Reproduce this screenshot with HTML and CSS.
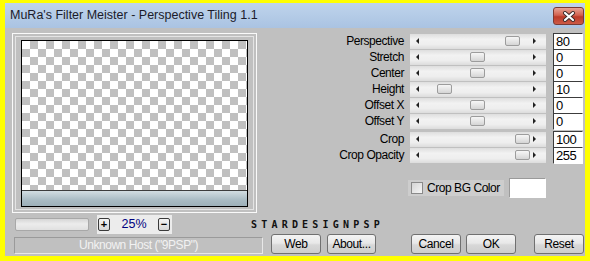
FILE: index.html
```html
<!DOCTYPE html>
<html lang="en">
<head>
  <meta charset="UTF-8">
  <title>Perspective Tiling</title>
  <link rel="stylesheet" href="styles.css">
</head>
<body>
  <div class="window">
    <div class="titlebar">
      <span class="title">MuRa's Filter Meister - Perspective Tiling 1.1</span>
      <button class="close">
        <svg width="14" height="11" viewBox="0 0 14 11">
          <path d="M3 2 L11 9 M11 2 L3 9" stroke="#3a2a2a" stroke-width="4" stroke-linecap="round"/>
          <path d="M3 2 L11 9 M11 2 L3 9" stroke="#ffffff" stroke-width="2.2" stroke-linecap="round"/>
        </svg>
      </button>
    </div>
    <div class="content">
      <div class="main">
        <div class="frame">
          <div class="preview">
            <div class="checker"></div>
            <div class="shade"></div>
          </div>
        </div>
        <div class="controls">
          <div class="slider">
            <span class="label">Perspective</span>
            <div class="track"><span class="arr left"></span><span class="thumb" style="left:95px"></span><span class="arr right"></span></div>
            <span class="val">80</span>
          </div>
          <div class="slider">
            <span class="label">Stretch</span>
            <div class="track"><span class="arr left"></span><span class="thumb" style="left:60px"></span><span class="arr right"></span></div>
            <span class="val">0</span>
          </div>
          <div class="slider">
            <span class="label">Center</span>
            <div class="track"><span class="arr left"></span><span class="thumb" style="left:60px"></span><span class="arr right"></span></div>
            <span class="val">0</span>
          </div>
          <div class="slider">
            <span class="label">Height</span>
            <div class="track"><span class="arr left"></span><span class="thumb" style="left:27px"></span><span class="arr right"></span></div>
            <span class="val">10</span>
          </div>
          <div class="slider">
            <span class="label">Offset X</span>
            <div class="track"><span class="arr left"></span><span class="thumb" style="left:60px"></span><span class="arr right"></span></div>
            <span class="val">0</span>
          </div>
          <div class="slider">
            <span class="label">Offset Y</span>
            <div class="track"><span class="arr left"></span><span class="thumb" style="left:60px"></span><span class="arr right"></span></div>
            <span class="val">0</span>
          </div>
          <div class="slider gap">
            <span class="label">Crop</span>
            <div class="track"><span class="arr left"></span><span class="thumb" style="left:105px"></span><span class="arr right"></span></div>
            <span class="val">100</span>
          </div>
          <div class="slider">
            <span class="label">Crop Opacity</span>
            <div class="track"><span class="arr left"></span><span class="thumb" style="left:105px"></span><span class="arr right"></span></div>
            <span class="val">255</span>
          </div>
          <div class="cropbg">
            <label class="check"><span class="box"></span>Crop BG Color</label>
            <span class="swatch"></span>
          </div>
        </div>
      </div>
      <div class="row-a">
        <div class="progress"></div>
        <div class="zoom">
          <span class="zbtn">+</span>
          <span class="pct">25%</span>
          <span class="zbtn">&minus;</span>
        </div>
        <span class="credit">STARDESIGNPSP</span>
      </div>
      <div class="row-b">
        <div class="status">Unknown Host ("9PSP")</div>
        <button class="btn web">Web</button>
        <button class="btn about">About...</button>
        <button class="btn cancel">Cancel</button>
        <button class="btn ok">OK</button>
        <button class="btn reset">Reset</button>
      </div>
    </div>
  </div>
</body>
</html>
```

FILE: styles.css
```css
* { box-sizing: border-box; }
body {
  margin: 0;
  padding: 3px 0 0 5px;
  background: #ffff00;
  font-family: "Liberation Sans", Arial, sans-serif;
  font-size: 12px;
  letter-spacing: -0.45px;
  color: #000;
}
.window {
  width: 580px;
  height: 253px;
  background: #c0c0c0;
  overflow: hidden;
}
.titlebar {
  height: 25px;
  display: flex;
  justify-content: space-between;
  align-items: flex-start;
  padding-left: 5px;
  background: linear-gradient(#bfd4ec, #aac3e2);
}
.title {
  font-size: 12.5px;
  letter-spacing: 0;
  line-height: 25px;
  color: #1b1b2a;
}
.close {
  width: 31px;
  height: 18px;
  margin: 4px 1px 0 0;
  padding: 0;
  border: 1px solid #7a3a34;
  border-radius: 3px;
  background: linear-gradient(#e8a496, #d2614f 45%, #bc3a28 55%, #cc5a47);
  display: flex;
  align-items: center;
  justify-content: center;
}

.main { display: flex; padding-top: 5px; }
.frame {
  width: 245px;
  height: 180px;
  margin-left: 7px;
  padding: 6px 8px 5px;
  border: 1px solid #fafafa;
  box-shadow: inset 0 0 0 2px #c0c0c0, inset 0 0 0 3px #e4e4e4;
}
.preview {
  height: 167px;
  border: 1px solid #000;
  display: flex;
  flex-direction: column;
}
.checker {
  height: 150px;
  border-bottom: 1px solid #3c3c3c;
  background-color: #fff;
  background-image:
    linear-gradient(45deg, #c0c0c0 25%, transparent 25%, transparent 75%, #c0c0c0 75%),
    linear-gradient(45deg, #c0c0c0 25%, transparent 25%, transparent 75%, #c0c0c0 75%);
  background-size: 16px 16px;
  background-position: 0 0, 8px 8px;
}
.shade {
  flex: 1;
  background: linear-gradient(#d2dde2, #a9bbc3 60%, #9db0b9);
}

.controls { margin-left: 5px; width: 321px; }
.slider {
  display: flex;
  align-items: center;
  height: 16px;
}
.slider.gap { margin-top: 2px; }
.label {
  width: 148px;
  text-align: right;
  padding-right: 6px;
  white-space: nowrap;
}
.track {
  position: relative;
  width: 136px;
  height: 15px;
  margin-right: 7px;
  display: flex;
  align-items: center;
  justify-content: space-between;
  padding: 0 10px 0 6px;
  background: linear-gradient(#dedede, #f2f2f2 35%, #eeeeee 70%, #dcdcdc);
}
.arr { width: 0; height: 0; border-top: 3px solid transparent; border-bottom: 3px solid transparent; }
.arr.left { border-right: 3px solid #222; }
.arr.right { border-left: 3px solid #222; }
.thumb {
  position: absolute;
  top: 2px;
  width: 15px;
  height: 10px;
  border: 1px solid #9c9c9c;
  border-radius: 2px;
  background: linear-gradient(#f6f6f6, #e6e6e6 50%, #d4d4d4);
}
.val {
  width: 30px;
  height: 17px;
  padding-left: 2px;
  line-height: 15px;
  font-size: 13px;
  letter-spacing: -0.5px;
  background: #fff;
  border: 1px solid #fff;
  border-top-color: #3c3c3c;
  border-left-color: #3c3c3c;
}

.cropbg {
  display: flex;
  align-items: center;
  margin: 15px 0 0 146px;
  height: 20px;
}
.check {
  display: flex;
  align-items: center;
  width: 96px;
  height: 16px;
  padding-left: 3px;
  background: #cdcdcd;
  white-space: nowrap;
}
.box {
  width: 12px;
  height: 12px;
  margin-right: 4px;
  border: 1px solid #8a8a8a;
  background: linear-gradient(135deg, #d4d4d4, #f6f6f6);
}
.swatch {
  width: 37px;
  height: 20px;
  margin-left: 5px;
  background: #fff;
  border: 1px solid #fff;
  border-top-color: #9a9a9a;
  border-left-color: #9a9a9a;
}

.row-a {
  display: flex;
  align-items: center;
  height: 20px;
  margin-top: 1px;
}
.progress {
  width: 74px;
  height: 13px;
  margin-left: 10px;
  border: 1px solid #a8a8a8;
  border-radius: 2px;
  background: linear-gradient(#d6d6d6, #ececec 45%, #e0e0e0);
}
.zoom {
  display: flex;
  align-items: center;
  width: 75px;
  height: 19px;
  margin-left: 8px;
  padding-left: 1px;
  background: #ececec;
}
.zbtn {
  width: 12px;
  height: 13px;
  border: 1px solid #3a3a3a;
  border-radius: 2px;
  background: linear-gradient(#f4f4f4, #d6d6d6);
  font-size: 11px;
  font-weight: bold;
  line-height: 10px;
  text-align: center;
  letter-spacing: 0;
}
.pct {
  width: 48px;
  text-align: center;
  color: #000080;
  font-size: 12.5px;
  letter-spacing: 0;
}
.credit {
  margin-left: 79px;
  font-family: "DejaVu Sans Mono", monospace;
  font-weight: bold;
  font-size: 10px;
  letter-spacing: 4.2px;
  color: #111;
}

.row-b {
  display: flex;
  align-items: flex-start;
  height: 20px;
}
.status {
  width: 249px;
  height: 17px;
  margin: 3px 0 0 9px;
  border: 1px solid #e8e8e8;
  border-top-color: #9a9a9a;
  border-left-color: #9a9a9a;
  color: #f2f2f2;
  text-align: center;
  line-height: 15px;
}
.btn {
  height: 20px;
  width: 50px;
  padding: 0;
  font-family: "Liberation Sans", Arial, sans-serif;
  font-size: 12px;
  letter-spacing: -0.4px;
  color: #000;
  border: 1px solid #707070;
  border-radius: 3px;
  background: linear-gradient(#f4f4f4, #e8e8e8 45%, #d8d8d8 55%, #cdcdcd);
}
.web { margin-left: 8px; }
.about { margin-left: 6px; width: 49px; }
.cancel { margin-left: 35px; }
.ok { margin-left: 5px; }
.reset { margin-left: 18px; }
```
